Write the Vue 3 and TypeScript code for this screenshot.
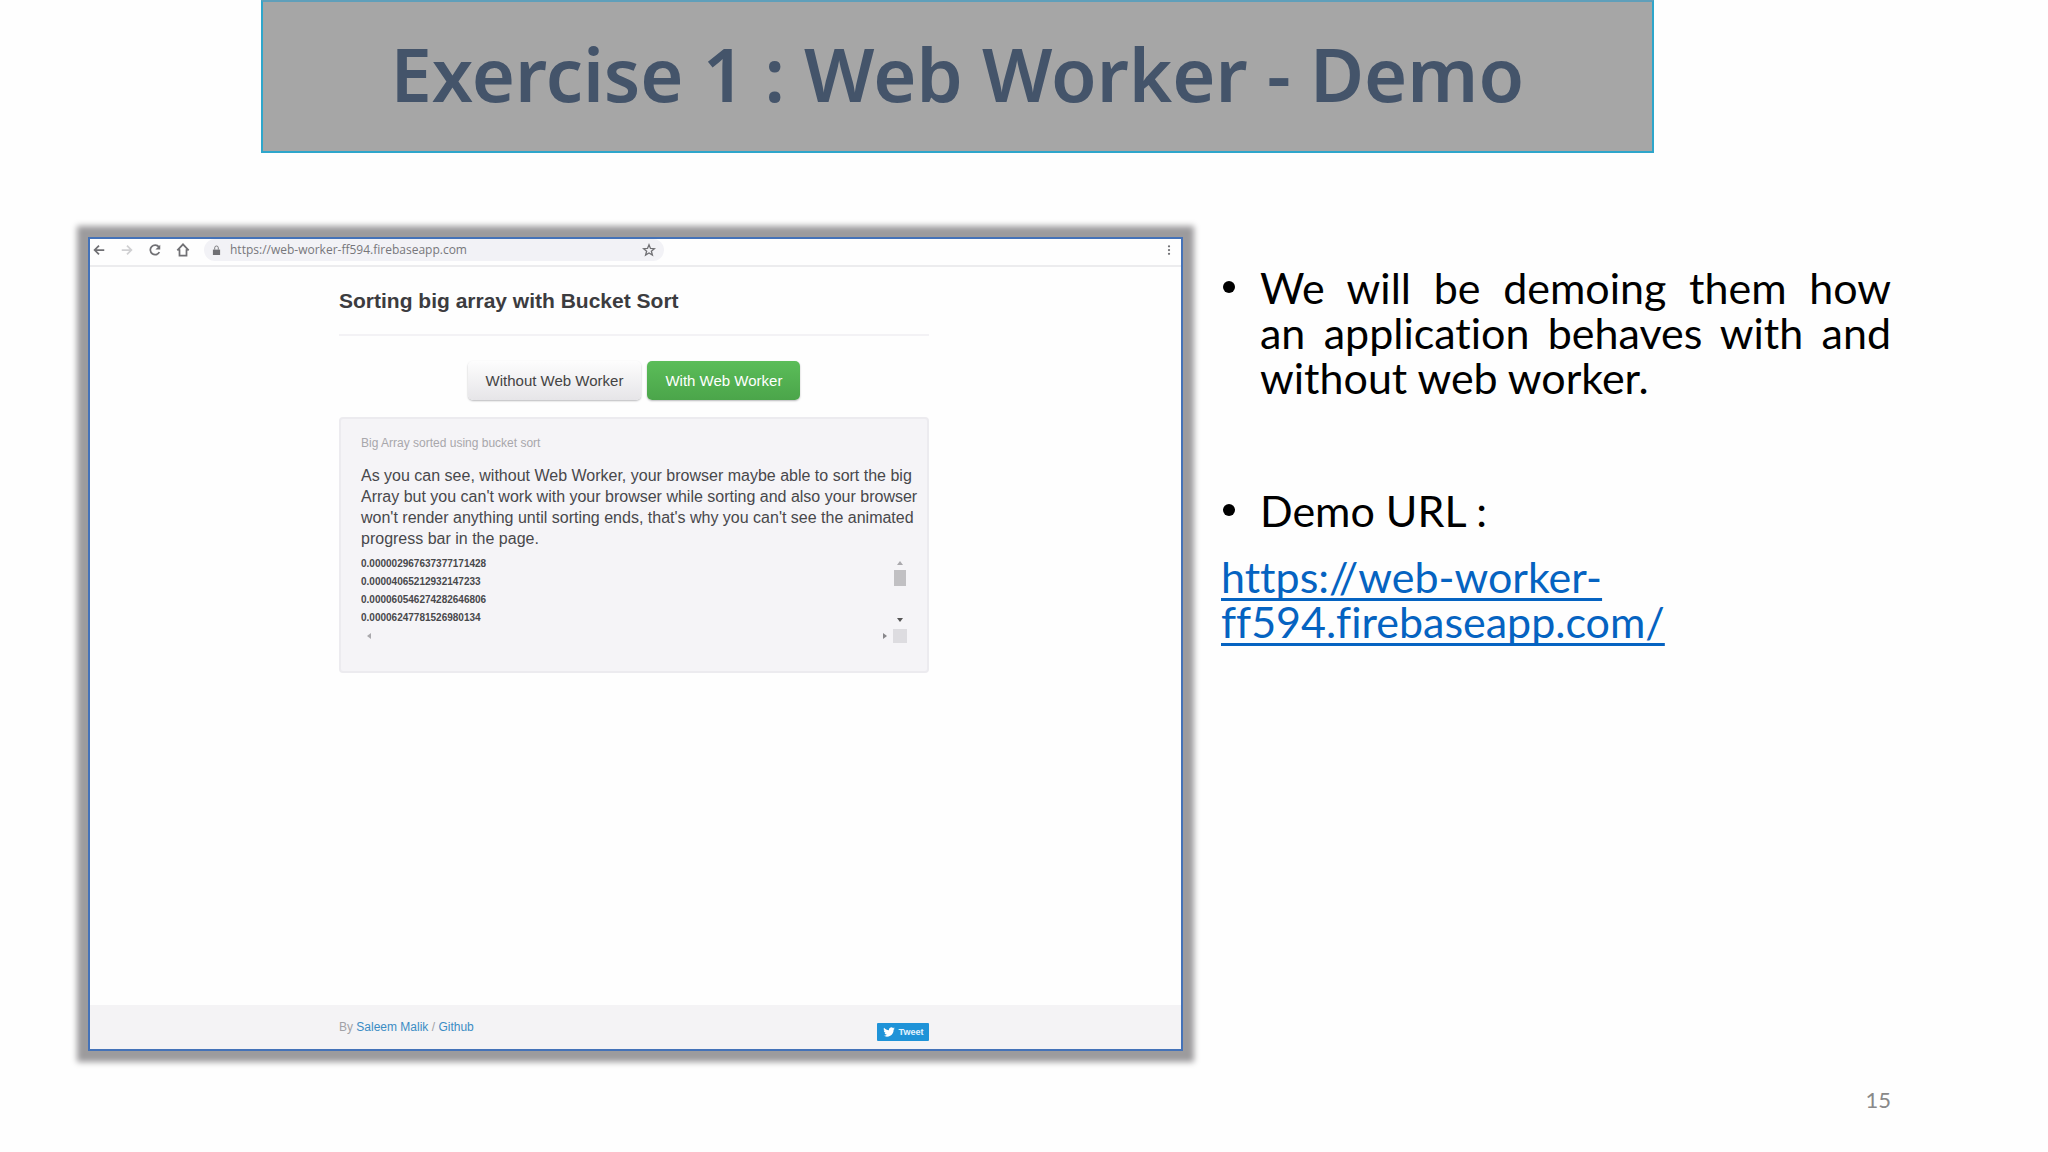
<script setup lang="ts">
import { ref } from 'vue'

const address = ref('https://web-worker-ff594.firebaseapp.com')
const demoUrl = 'https://web-worker-ff594.firebaseapp.com/'
const sorted: string[] = [
  '0.000002967637377171428',
  '0.00004065212932147233',
  '0.000060546274282646806',
  '0.00006247781526980134',
]
</script>

<template>
  <div class="slide">
    <header class="banner">
      <h1>Exercise 1 : Web Worker - Demo</h1>
    </header>

    <main class="content">
      <section class="browser" aria-label="Demo application">
        <div class="toolbar">
          <button class="tool" aria-label="Back">
            <svg viewBox="0 0 16 16"><path d="M14 8H3M8 3L3 8l5 5" /></svg>
          </button>
          <button class="tool faded" aria-label="Forward">
            <svg viewBox="0 0 16 16"><path d="M2 8h11M8 3l5 5-5 5" /></svg>
          </button>
          <button class="tool" aria-label="Reload">
            <svg viewBox="0 0 16 16"><path d="M13 10.500A5.500 5.500 0 1 1 12.500 4.500" /><path class="solid" d="M14 2v5.500H8.500z" /></svg>
          </button>
          <button class="tool" aria-label="Home">
            <svg viewBox="0 0 16 16"><path d="M1.500 8.500L8 1.500l6.500 7M4 7v7.500h8V7" /></svg>
          </button>
          <div class="address">
            <svg class="lock" viewBox="0 0 10 12"><path class="solid" d="M1 5h8v6H1z" /><path d="M3 5V3a2 2 0 0 1 4 0v2" /></svg>
            <input v-model="address" type="text" aria-label="Address" />
            <button class="star" aria-label="Bookmark">
              <svg viewBox="0 0 16 16"><path d="M8 2l1.700 4.200 4.500.3-3.500 2.900 1.200 4.400L8 11.400l-3.900 2.400 1.200-4.400L1.800 6.500l4.500-.3z" /></svg>
            </button>
          </div>
          <button class="tool menu" aria-label="Menu">
            <svg viewBox="0 0 16 16"><circle cx="8" cy="3" r="1.500" /><circle cx="8" cy="8" r="1.500" /><circle cx="8" cy="13" r="1.500" /></svg>
          </button>
        </div>

        <div class="page">
          <div class="column">
            <h2>Sorting big array with Bucket Sort</h2>
            <div class="actions">
              <button class="btn">Without Web Worker</button>
              <button class="btn success">With Web Worker</button>
            </div>
            <div class="well">
              <p class="caption">Big Array sorted using bucket sort</p>
              <p class="note">
                As you can see, without Web Worker, your browser maybe able to sort the big Array but
                you can't work with your browser while sorting and also your browser won't render
                anything until sorting ends, that's why you can't see the animated progress bar in the
                page.
              </p>
              <div class="output">
                <ol>
                  <li v-for="n in sorted" :key="n">{{ n }}</li>
                </ol>
                <div class="vbar">
                  <i class="arrow up"></i>
                  <i class="thumb"></i>
                  <i class="arrow down"></i>
                </div>
                <div class="hbar">
                  <i class="arrow left"></i>
                  <i class="arrow right"></i>
                </div>
                <div class="corner"></div>
              </div>
            </div>
          </div>
        </div>

        <footer class="site-footer">
          <div class="column credits">
            <span>By <a href="#">Saleem Malik</a> / <a href="#">Github</a></span>
            <button class="tweet">
              <svg viewBox="0 0 24 24"><path d="M23.600 4.900c-.8.400-1.700.6-2.700.8 1-.6 1.700-1.500 2.100-2.600-.9.500-1.900.9-3 1.100a4.700 4.700 0 0 0-8 4.300C8 8.300 4.500 6.400 2.200 3.500a4.700 4.700 0 0 0 1.500 6.300c-.8 0-1.500-.2-2.100-.6 0 2.300 1.600 4.200 3.800 4.700-.7.200-1.400.2-2.100.1.600 1.900 2.300 3.200 4.400 3.300A9.500 9.500 0 0 1 .7 19.200 13.400 13.400 0 0 0 21.200 7.300c.9-.7 1.700-1.500 2.400-2.400z" /></svg>
              Tweet
            </button>
          </div>
        </footer>
      </section>

      <section class="points">
        <ul>
          <li class="justified">We will be demoing them how an&nbsp;application behaves with and without web worker.</li>
          <li>Demo URL :</li>
        </ul>
        <a class="demo-link" :href="demoUrl">{{ demoUrl }}</a>
      </section>
    </main>

    <footer class="page-number">15</footer>
  </div>
</template>

<style>
body {
  margin: 0;
  background: #fefefe;
}
</style>

<style scoped>
* {
  box-sizing: border-box;
}

.slide {
  display: flex;
  flex-direction: column;
  min-height: 100vh;
  color: #000;
  font-family: Lato, 'Open Sans', sans-serif;
}

h1,
h2,
p,
ul,
ol {
  margin: 0;
  padding: 0;
}

button {
  padding: 0;
  border: 0;
  background: none;
  color: inherit;
  font-family: inherit;
}

svg {
  display: block;
  fill: none;
  stroke: currentColor;
  stroke-width: 2;
}

.banner {
  width: 68%;
  margin-left: 261px;
  padding: 22px 0 28px;
  border: 2px solid #2ea6cb;
  border-top-color: #5f9fba;
  background: #a6a6a6;
  text-align: center;
}

h1 {
  color: #44546a;
  font: 600 74px/99px 'Noto Sans', 'Open Sans', sans-serif;
}

.content {
  flex: 1;
  display: grid;
  grid-template-columns: 1095fr 670fr;
  gap: 38px;
  margin: 84px 157px 0 88px;
}

.browser {
  display: flex;
  flex-direction: column;
  border: 2px solid #4472b8;
  background: #fefefe;
  box-shadow: 0 0 6px 11px #9c9b9d;
  color: #333;
  font-family: 'Liberation Sans', Arial, sans-serif;
}

.toolbar {
  display: flex;
  align-items: center;
  gap: 14px;
  height: 28px;
  padding: 0 6px 4px 2px;
  border-bottom: 2px solid #ececee;
  color: #707074;
}

.tool svg {
  width: 14px;
  height: 14px;
}

.faded {
  color: #d0d0d2;
}

.solid,
.menu circle {
  fill: currentColor;
  stroke: none;
}

.menu {
  margin-left: auto;
}

.menu svg {
  width: 12px;
  height: 12px;
}

.address {
  display: flex;
  align-items: center;
  gap: 9px;
  width: 460px;
  height: 22px;
  padding: 0 8px 0 8px;
  border-radius: 11px;
  background: #f2f2f6;
}

.lock {
  width: 9px;
  height: 11px;
  stroke-width: 1;
}

.address input {
  flex: 1;
  min-width: 0;
  padding: 0;
  border: 0;
  outline: 0;
  background: none;
  color: #77777b;
  font: 12px/20px 'Open Sans', 'Noto Sans', sans-serif;
}

.star svg {
  width: 14px;
  height: 14px;
  stroke-width: 1.5;
}

.page {
  flex: 1;
  padding: 18px 3px 0 0;
}

.column {
  width: 590px;
  max-width: 100%;
  margin: 0 auto;
}

h2 {
  padding-bottom: 17px;
  border-bottom: 2px solid #f3f2f5;
  color: #3c3c3f;
  font-size: 21px;
  line-height: 32px;
}

.actions {
  display: flex;
  justify-content: center;
  gap: 6px;
  margin: 25px 0 17px;
}

.btn {
  padding: 0 18px;
  border-radius: 5px;
  background: linear-gradient(#fdfdfd, #e6e5e8);
  box-shadow: 0 1px 2px #b9b9bc;
  color: #444;
  font-size: 15px;
  line-height: 39px;
}

.success {
  background: linear-gradient(#5bbd59, #4ba54a);
  color: #fff;
}

.well {
  padding: 14px 20px 28px;
  border: 2px solid #ecebef;
  border-radius: 4px;
  background: #f5f4f7;
}

.caption {
  color: #a8a7ab;
  font-size: 12px;
  line-height: 21px;
}

.note {
  margin: 11px -14px 6px 0;
  color: #48484b;
  font-size: 16px;
  line-height: 21px;
}

.output {
  display: grid;
  grid-template-columns: 1fr 14px;
  grid-template-rows: auto 14px;
  row-gap: 2px;
}

.output ol {
  color: #48484b;
  font-size: 10px;
  font-weight: 700;
  line-height: 18px;
  list-style: none;
}

.vbar {
  display: flex;
  flex-direction: column;
  align-items: center;
  gap: 5px;
  padding: 6px 0 5px;
}

.thumb {
  width: 12px;
  height: 16px;
  background: #c1c0c3;
}

.arrow {
  border: 3px solid transparent;
}

.up {
  border-top: 0;
  border-bottom: 4px solid #aaa9ad;
}

.down {
  margin-top: auto;
  border-bottom: 0;
  border-top: 4px solid #555;
}

.hbar {
  display: flex;
  align-items: center;
  justify-content: space-between;
  padding: 0 6px;
}

.left {
  border-left: 0;
  border-right: 4px solid #aaa9ad;
}

.right {
  border-right: 0;
  border-left: 4px solid #88878b;
}

.corner {
  background: #dddce0;
}

.site-footer {
  padding: 15px 3px 8px 0;
  background: #f4f3f5;
  color: #a2a2a6;
  font-size: 12px;
}

.credits {
  display: flex;
  justify-content: space-between;
}

.credits a {
  color: #3b8cc4;
  text-decoration: none;
}

.tweet {
  display: flex;
  align-items: center;
  justify-content: center;
  gap: 4px;
  width: 52px;
  height: 18px;
  margin-top: 3px;
  border-radius: 1px;
  background: #1f93d8;
  color: #e4f4ff;
  font-size: 9px;
  font-weight: 700;
}

.tweet svg {
  width: 12px;
  height: 12px;
  fill: #fff;
  stroke: none;
}

.points {
  padding-top: 28px;
  font-size: 43px;
  font-variant-ligatures: none;
  line-height: 45px;
}

.points ul {
  display: grid;
  gap: 88px;
  list-style: none;
}

.points li {
  position: relative;
  padding-left: 39px;
}

.points li::before {
  content: '';
  position: absolute;
  top: 16px;
  left: 2px;
  width: 12px;
  height: 12px;
  border-radius: 50%;
  background: #000;
}

.justified {
  text-align: justify;
}

.demo-link {
  display: block;
  margin-top: 21px;
  color: #0563c1;
  text-decoration-thickness: 3px;
  text-underline-offset: 5px;
  text-decoration-skip-ink: none;
}

.page-number {
  padding: 36px 157px 39px 0;
  color: #898989;
  font-size: 22px;
  line-height: 26px;
  text-align: right;
}
</style>
